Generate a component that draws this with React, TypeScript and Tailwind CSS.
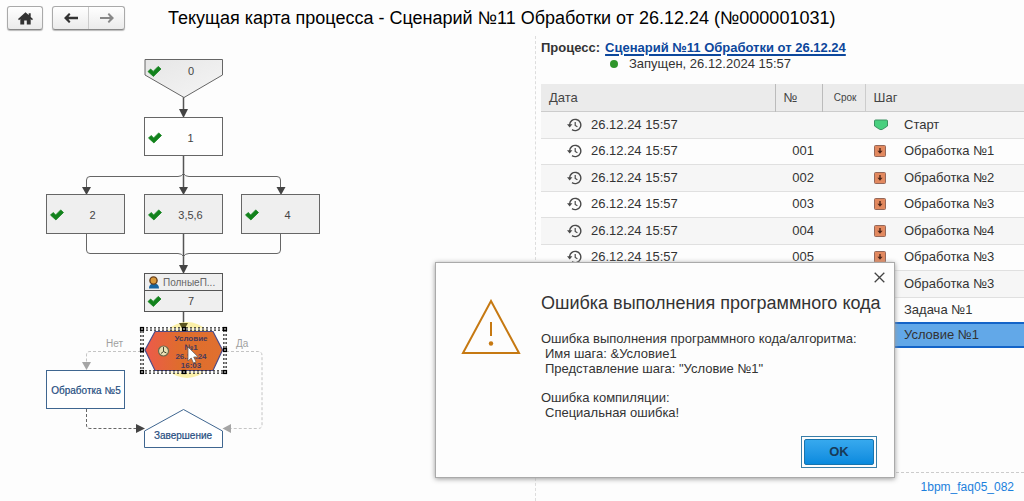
import clsx from "clsx";

interface Step {
  date?: string;
  num?: string;
  name: string;
  kind?: "start" | "step";
  selected?: boolean;
}

const steps: Step[] = [
  { date: "26.12.24 15:57", name: "Старт", kind: "start" },
  { date: "26.12.24 15:57", num: "001", name: "Обработка №1", kind: "step" },
  { date: "26.12.24 15:57", num: "002", name: "Обработка №2", kind: "step" },
  { date: "26.12.24 15:57", num: "003", name: "Обработка №3", kind: "step" },
  { date: "26.12.24 15:57", num: "004", name: "Обработка №4", kind: "step" },
  { date: "26.12.24 15:57", num: "005", name: "Обработка №3", kind: "step" },
  { name: "Обработка №3" },
  { name: "Задача №1" },
  { name: "Условие №1", selected: true },
];

function HistoryIcon() {
  return (
    <svg width="15" height="14" viewBox="0 0 15 14" fill="none" stroke="#4a4a4a" strokeWidth="1.4" aria-hidden="true">
      <path d="M2.6 7A5.6 5.6 0 1 1 5 11.6" />
      <path d="M0 6.2h5.4L2.7 9.4z" fill="#4a4a4a" stroke="none" />
      <path d="M8.2 4v3.4l2.2 1.4" strokeWidth="1.2" />
    </svg>
  );
}

function StepIcon({ kind }: { kind: Step["kind"] }) {
  if (kind === "start") {
    return (
      <svg width="14" height="12" viewBox="0 0 14 12" aria-hidden="true">
        <path d="M.5 2Q.5 1 1.5 1h11q1 0 1 1v5L8.500 10.300q-1.500.700-3 0L.5 7z" fill="#49d07f" stroke="#3d9263" />
      </svg>
    );
  }
  return (
    <svg width="12" height="12" viewBox="0 0 12 12" aria-hidden="true">
      <rect x=".5" y=".5" width="11" height="11" rx="1" fill="#e2895f" stroke="#94685a" />
      <path d="M6 3v4" stroke="#4b2418" strokeWidth="1.4" />
      <path d="M3.4 5.8h5.2L6 8.8z" fill="#4b2418" />
    </svg>
  );
}

function Check({ x, y }: { x: number; y: number }) {
  return (
    <path
      d="M0 5.6 2.6 3 5.2 5.400 10.200.4 13 3 5.400 10.400z"
      transform={`translate(${x} ${y})`}
      fill="#12821c"
      stroke="#12821c"
      strokeWidth=".8"
      strokeLinejoin="round"
    />
  );
}

function Label({ x, y, children }: { x: number; y: number; children: string }) {
  return (
    <text x={x} y={y} textAnchor="middle" fill="#444" className="text-[11px]">
      {children}
    </text>
  );
}

const boxes = [
  { x: 144.5, y: 117.5, label: "1", fill: "#fefefe" },
  { x: 46.5, y: 194.5, label: "2", fill: "#efefef" },
  { x: 144.5, y: 194.5, label: "3,5,6", fill: "#efefef" },
  { x: 241.5, y: 194.5, label: "4", fill: "#efefef" },
];

const handles = [
  [142, 329], [184, 329], [225, 329],
  [142, 350], [225, 350],
  [142, 372], [184, 372], [225, 372],
];

function ProcessMap() {
  return (
    <svg className="shrink-0" width="535" height="464" viewBox="0 36 535 464" role="img" aria-label="Карта процесса">
      <defs>
        <linearGradient id="startFill" x1="0" x2="1" y1="0" y2="1">
          <stop offset="0" stopColor="#e6e6e6" />
          <stop offset="1" stopColor="#f5f5f5" />
        </linearGradient>
        <linearGradient id="hexFill">
          <stop offset="0" stopColor="#ec5a4c" />
          <stop offset=".45" stopColor="#df6d2c" />
          <stop offset="1" stopColor="#e0702f" />
        </linearGradient>
      </defs>

      {/* connectors */}
      <g fill="none" stroke="#666">
        <path d="M183.5 97v13M183.5 155v32M183.5 233v33M183.5 311v14" stroke="#555" strokeWidth="1.5" />
        <path d="M86.5 188v-8q0-3.5 3.5-3.5h88q4 0 5.5-3 1.5 3 5.5 3h88q3.5 0 3.5 3.5v8" />
        <path d="M86.5 233v17q0 3.5 3.5 3.5h88q4 0 5.5 3 1.5-3 5.5-3h88q3.5 0 3.5-3.5v-17" />
      </g>
      <g fill="#444">
        <path d="M179 109h9l-4.5 9z" />
        <path d="M82 187h9l-4.5 8zM179 187h9l-4.5 8zM276.5 187h9l-4.5 8z" />
        <path d="M179 265h9l-4.5 9z" />
      </g>
      <g fill="none" stroke="#c4c4c4" strokeDasharray="3 2">
        <path d="M141 351.5H90q-3.5 0-3.5 3.5v8" />
        <path d="M226 351.5h32q4 0 4 4V425q0 3.5-4 3.5h-27" />
      </g>
      <path d="M86.5 409v16q0 3.5 3.5 3.5h48" fill="none" stroke="#666" strokeDasharray="3 2" />
      <path d="M82 362h9l-4.5 8zM231 424v9l-8.5-4.5z" fill="#a5a5a5" />
      <path d="M136 424v9l9-4.5z" fill="#444" />
      <g fill="#a0a0a0" className="text-[10px]">
        <text x="106" y="347">Нет</text>
        <text x="236" y="347">Да</text>
      </g>

      {/* start */}
      <path d="M145 59.5h77.5V75L184 97.5 145 75z" fill="url(#startFill)" stroke="#666" />
      <Check x={148} y={66} />
      <Label x={191} y={75}>0</Label>

      {boxes.map((box) => (
        <g key={box.label}>
          <rect x={box.x} y={box.y} width="78" height={box.label === "1" ? 38 : 39} fill={box.fill} stroke="#666" />
          <Check x={box.x + 4} y={box.y + 15} />
          <Label x={box.x + 46} y={box.y + 24}>{box.label}</Label>
        </g>
      ))}

      {/* task with assignee */}
      <rect x="144.5" y="273.5" width="78" height="38" fill="#efefef" stroke="#555" />
      <path d="M144.5 290.5h78" stroke="#555" />
      <path d="M149 288.5q0-5 5-5t5 5z" fill="#17649f" />
      <circle cx="153.5" cy="280.5" r="3.6" fill="#d99a3c" stroke="#68401a" strokeWidth="1.4" />
      <text x="163" y="286" fill="#666" className="text-[10px]">ПолныеП...</text>
      <Check x={148} y={296} />
      <Label x={191} y={305}>7</Label>

      {/* selected condition */}
      <circle cx="187" cy="350" r="28" fill="#fbf0a8" />
      <path d="M155 331.5h58l9.5 18.5-9.5 20.5h-58L145 350z" fill="url(#hexFill)" stroke="#4c4a86" strokeWidth="1.2" />
      <circle cx="163.5" cy="351" r="5" fill="#e8e0b4" stroke="#6b6a4c" strokeWidth="1.2" />
      <path d="M163.5 347v4.5l-2.5 2M163.5 351.5l3 1.5" fill="none" stroke="#45452f" />
      <g textAnchor="middle" fill="#473a5c" className="text-[8px] font-bold">
        <text x="191" y="341">Условие</text>
        <text x="191" y="350">№1</text>
        <text x="191" y="359">26.12.24</text>
        <text x="191" y="368">16:03</text>
      </g>
      <path d="M179 323h9l-4.5 8z" fill="#5b5420" />
      <rect x="142" y="329" width="83" height="43" fill="none" stroke="#222" strokeWidth="3.5" strokeDasharray="2 2" />
      <rect x="142" y="329" width="83" height="43" fill="none" stroke="#fff" strokeWidth="1" />
      {handles.map(([x, y]) => (
        <rect key={`${x}-${y}`} x={x - 1.5} y={y - 1.5} width="3" height="3" fill="#999" stroke="#000" strokeWidth="1.2" />
      ))}
      <path d="M188 347v14l3.2-3 2.3 5 2.5-1.2-2.3-4.8h4.5z" fill="#fff" stroke="#555" strokeWidth=".7" />

      <rect x="46.5" y="370.5" width="78" height="38" fill="#fff" stroke="#3f6690" />
      <path d="M183.5 409.5 222.5 431v16.5h-78V431z" fill="#fff" stroke="#3f6690" />
      <g textAnchor="middle" fill="#1f4d80" stroke="#1f4d80" strokeWidth=".2" className="text-[10px]">
        <text x="86" y="394">Обработка №5</text>
        <text x="183" y="439">Завершение</text>
      </g>
    </svg>
  );
}

function Toolbar() {
  const frame = "h-6 rounded-[3px] border border-[#aaa] border-b-[#888] bg-linear-to-b from-white to-[#ebebeb] shadow-[0_1px_1px_#bbb]";
  return (
    <header className="flex h-9 items-center pl-[7px]">
      <button aria-label="Домой" className={clsx(frame, "flex w-9 items-center justify-center")}>
        <svg width="15" height="13" viewBox="0 0 15 13" fill="#333" aria-hidden="true">
          <path d="M7.5.3 0 7l1 1.2L2.3 7v5.5h3.9V8.4h2.6v4.1h3.9V7L14 8.2 15 7l-2.3-2.1V1.2h-2v1.9z" />
        </svg>
      </button>
      <div className={clsx(frame, "ml-[9px] flex w-[73px]")}>
        <button aria-label="Назад" className="flex flex-1 items-center justify-center border-r border-[#ccc]">
          <svg width="14" height="10" viewBox="0 0 14 10" fill="#333" aria-hidden="true">
            <path d="M0 5 5 0 6.5 1.300 4.500 3.800H14v2.400H4.500l2 2.500L5 10z" />
          </svg>
        </button>
        <button aria-label="Вперёд" className="flex flex-1 items-center justify-center">
          <svg width="14" height="10" viewBox="0 0 14 10" fill="#888" aria-hidden="true">
            <path d="M14 5 9 0 7.700 1.200 9.800 4H0v2h9.800L7.700 8.800 9 10z" />
          </svg>
        </button>
      </div>
      <h1 className="ml-[43px] whitespace-nowrap text-[18px] text-black">
        Текущая карта процесса - Сценарий №11 Обработки от 26.12.24 (№000001031)
      </h1>
    </header>
  );
}

function StepsTable() {
  return (
    <table className="w-full table-fixed border-collapse text-left">
      <colgroup>
        <col className="w-[234px]" />
        <col className="w-[47px]" />
        <col className="w-[43px]" />
        <col />
      </colgroup>
      <thead>
        <tr className="h-[27px] border-b border-[#ccc] bg-[#ebebeb] text-[#444]">
          <th className="border-r border-[#bbb] pl-2 font-normal">Дата</th>
          <th className="border-r border-[#bbb] pl-2 font-normal">№</th>
          <th className="border-r border-[#ccc] pr-2 text-right text-[10px] font-normal">Срок</th>
          <th className="pl-2 font-normal">Шаг</th>
        </tr>
      </thead>
      <tbody>
        {steps.map((step, i) => (
          <tr
            key={i}
            className={clsx(
              step.selected
                ? "h-6 border-y-2 border-[#1464c8] bg-[#62a8e8]"
                : "h-[26px] border-b border-[#e0e0e0] odd:h-[27px] odd:bg-[#f6f6f6]",
            )}
          >
            <td>
              {step.date && (
                <div className="flex items-center gap-[9px] pl-[26px]">
                  <HistoryIcon />
                  {step.date}
                </div>
              )}
            </td>
            <td className="pr-2 text-right">{step.num}</td>
            <td />
            <td>
              <div className="flex items-center pl-[9px]">
                <span className="flex w-[30px] items-center">{step.kind && <StepIcon kind={step.kind} />}</span>
                {step.name}
              </div>
            </td>
          </tr>
        ))}
      </tbody>
    </table>
  );
}

function ErrorDialog() {
  return (
    <div
      role="alertdialog"
      aria-labelledby="error-title"
      className="absolute top-[262px] left-[435px] flex w-[460px] flex-col border border-[#aaa] bg-[#fdfdfd] pb-[9px] shadow-[0_1px_5px_#999]"
    >
      <button aria-label="Закрыть" className="mt-[9px] mr-[9px] self-end">
        <svg width="11" height="11" viewBox="0 0 11 11" stroke="#444" strokeWidth="1.3" aria-hidden="true">
          <path d="m.7.7 9.6 9.6M10.3.7.7 10.3" />
        </svg>
      </button>
      <div className="flex pl-[25px]">
        <svg className="mt-4 shrink-0" width="60" height="56" viewBox="0 0 60 56" fill="none" stroke="#c67912" strokeWidth="2" aria-hidden="true">
          <path d="M30 2 58 54H2z" />
          <path d="M30 23v14" />
          <circle cx="30" cy="44.5" r="2.2" fill="#c67912" stroke="none" />
        </svg>
        <div className="ml-5 pt-2 leading-[15px]">
          <h2 id="error-title" className="text-[18px] leading-6">Ошибка выполнения программного кода</h2>
          <p className="mt-4">Ошибка выполнения программного кода/алгоритма:</p>
          <p className="pl-1">Имя шага: &amp;Условие1</p>
          <p className="pl-1">Представление шага: "Условие №1"</p>
          <p className="mt-[14px]">Ошибка компиляции:</p>
          <p className="pl-1">Специальная ошибка!</p>
        </div>
      </div>
      <div className="mt-4 mr-[17px] self-end border border-[#397ea8] p-[2px]">
        <button className="block h-[26px] w-[70px] rounded-[2px] border border-[#1774ae] bg-linear-to-b from-[#36a9ee] to-[#078ade] font-bold text-[#173a58]">
          OK
        </button>
      </div>
    </div>
  );
}

export default function App() {
  return (
    <div className="relative flex min-h-screen flex-col overflow-hidden bg-[#fdfdfd] font-['Liberation_Sans',Arial,sans-serif] text-[13px] text-[#333]">
      <Toolbar />
      <main className="flex flex-1">
        <ProcessMap />
        <section className="flex min-w-0 flex-1 flex-col border-l border-dashed border-[#ddd]">
          <div className="flex-1 border-b border-dashed border-[#ccc] pl-[5px]">
            <div className="pt-1 leading-4">
              <div className="flex gap-[5px] font-bold">
                <span>Процесс:</span>
                <a href="#process" className="text-[#0c479c] underline decoration-2 underline-offset-2">
                  Сценарий №11 Обработки от 26.12.24
                </a>
              </div>
              <div className="flex items-center gap-[11px] pl-[69px]">
                <span className="size-2 rounded-full bg-[#2f962b]" />
                Запущен, 26.12.2024 15:57
              </div>
            </div>
            <div className="mt-3">
              <StepsTable />
            </div>
          </div>
          <footer className="flex h-7 items-center justify-end pr-[10px] text-[12px] text-[#1b80dc]">1bpm_faq05_082</footer>
        </section>
      </main>
      <ErrorDialog />
    </div>
  );
}
